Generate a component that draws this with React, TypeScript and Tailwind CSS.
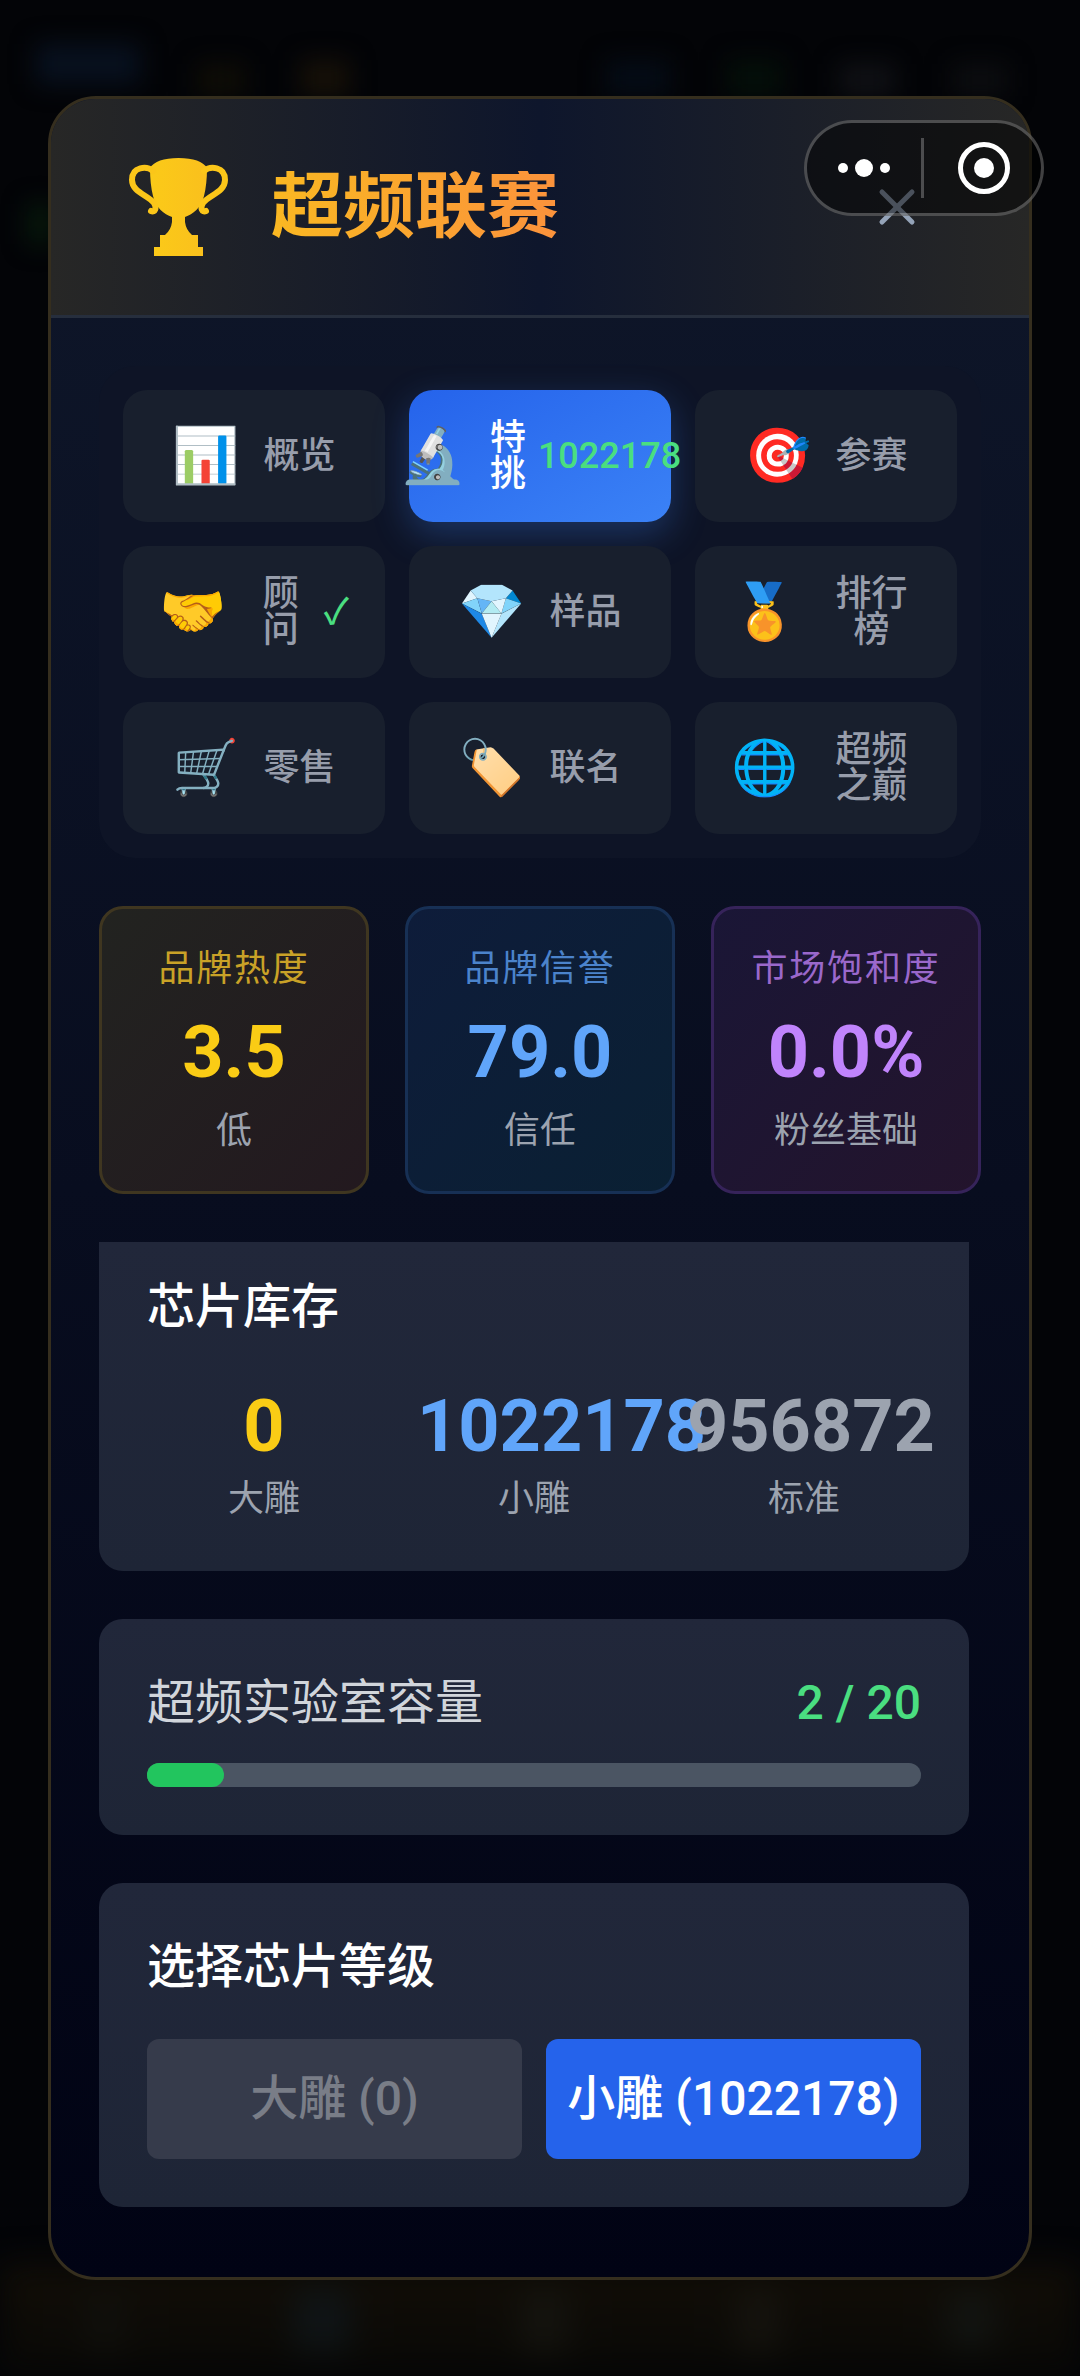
import { X } from "lucide-react";

const CARD = "rounded-3xl bg-linear-to-b/srgb from-[#21273a] to-[#1e2536] px-12";

function Trophy() {
  const handle = "M24 13C18 8 3 8 3 22C3 34 19 37 25 45C28 50 26 55 22 53";
  return (
    <svg viewBox="-6 0 112 98" className="w-[112px] shrink-0" aria-hidden="true">
      <defs>
        <linearGradient id="trophyGold" x1="0" x2="1">
          <stop offset="0" stopColor="#fbca18" />
          <stop offset="1" stopColor="#fac01d" />
        </linearGradient>
      </defs>
      <path
        fill="url(#trophyGold)"
        d="M21 10Q27 0 49.500 0T78 10Q78 26 75 38C72 50 64 56 56 59V64Q57 72 63 77H69V89H74V98H25V89H31V77H36Q42 72 43 64V59C35 56 27 50 24 38Q21 26 21 10Z"
      />
      <g fill="none" stroke="#fbc619" strokeWidth="6" strokeLinecap="round">
        <path d={handle} />
        <path d={handle} transform="translate(99 0) scale(-1 1)" />
      </g>
    </svg>
  );
}

const tabs = [
  { icon: "📊", label: "概览" },
  { icon: "🔬", label: "特挑", badge: "1022178", active: true },
  { icon: "🎯", label: "参赛" },
  { icon: "🤝", label: "顾问", badge: "✓" },
  { icon: "💎", label: "样品" },
  { icon: "🏅", label: "排行榜" },
  { icon: "🛒", label: "零售" },
  { icon: "🏷️", label: "联名" },
  { icon: "🌐", label: "超频之巅" },
];

const stats = [
  {
    name: "品牌热度", value: "3.5", note: "低",
    box: "border-[#3f3620] from-[#222320] to-[#23191f]", title: "text-[#c9a227]", num: "text-[#facc15]",
  },
  {
    name: "品牌信誉", value: "79.0", note: "信任",
    box: "border-[#173055] from-[#0e1c3a] to-[#0a2033]", title: "text-[#4b83cb]", num: "text-[#60a5fa]",
  },
  {
    name: "市场饱和度", value: "0.0%", note: "粉丝基础",
    box: "border-[#36235a] from-[#1a1636] to-[#23142c]", title: "text-[#9a68cb]", num: "text-[#c084fc]",
  },
];

const stock = [
  { name: "大雕", value: "0", color: "text-[#facc15]" },
  { name: "小雕", value: "1022178", color: "text-[#60a5fa]" },
  { name: "标准", value: "956872", color: "text-[#9ca3af]" },
];

function Backdrop() {
  return (
    <div aria-hidden="true" className="absolute inset-0 flex flex-col overflow-hidden">
      <div className="flex h-24 items-end justify-between pr-18 pl-9 blur-md">
        <i className="mb-3 h-10 w-26 bg-[#08111f]" />
        <i className="h-8 w-12 bg-[#0f0d06]" />
        <i className="h-9 w-12 bg-[#171108]" />
        <i className="w-36" />
        <i className="h-9 w-16 bg-[#050c16]" />
        <i className="h-9 w-14 bg-[#040f09]" />
        <i className="h-8 w-14 bg-[#101115]" />
        <i className="h-8 w-14 bg-[#0c0d10]" />
      </div>
      <i className="mt-27 ml-7 h-10 w-6 bg-[#071a0c] blur-md" />
      <div className="mt-auto flex h-28 items-center justify-around bg-linear-to-b/srgb from-[#120e07] to-[#080806] blur-lg">
        <i className="h-16 w-10 bg-[#100f0b]" />
        <i className="h-16 w-14 bg-[#0f1416]" />
        <i className="h-16 w-12 bg-[#14130e]" />
        <i className="h-16 w-10 bg-[#15130e]" />
        <i className="h-14 w-12 bg-[#121411]" />
      </div>
    </div>
  );
}

export default function App() {
  return (
    <main className="relative flex min-h-screen flex-col bg-[#030407] px-12 py-24 font-['Roboto','Noto_Sans_CJK_SC',sans-serif] text-white">
      <Backdrop />
      <section className="relative flex flex-1 flex-col overflow-hidden rounded-[48px] border-3 border-[#352e1e] bg-linear-to-b/srgb from-[#0f172a] to-[#010314]">
        <header className="flex items-center justify-between border-b-3 border-[#262e3d] bg-linear-to-r/srgb from-[#272726] via-[#0e162c] to-[#272726] px-18 py-12">
          <div className="flex items-center gap-9">
            <Trophy />
            <h1 className="bg-linear-to-r/srgb from-[#fab822] to-[#fb923c] bg-clip-text text-7xl font-bold text-transparent">
              超频联赛
            </h1>
          </div>
          <button type="button" aria-label="关闭" className="flex size-30 items-center justify-center text-[#94a3b8]">
            <X size={60} />
          </button>
        </header>

        <div className="flex flex-col gap-12 p-12">
          <nav className="grid grid-cols-3 gap-6 rounded-[36px] bg-[#0e1426] p-6">
            {tabs.map((tab) => (
              <button
                key={tab.label}
                type="button"
                className={
                  "flex h-33 items-center justify-center rounded-3xl px-9 text-4xl leading-none font-medium " +
                  (tab.active
                    ? "bg-linear-to-br/srgb from-[#2563eb] to-[#3b82f6] text-white shadow-[0_12px_36px_rgba(59,130,246,0.3)]"
                    : "bg-[#181f2d] text-[#979dab]")
                }
              >
                <span className="mr-6 flex w-[67px] shrink-0 justify-center text-[54px] leading-none">{tab.icon}</span>
                <span>{tab.label}</span>
                {tab.badge && <span className="ml-3 shrink-0 text-[#4ade80]">{tab.badge}</span>}
              </button>
            ))}
          </nav>

          <div className="grid grid-cols-3 gap-9">
            {stats.map((s) => (
              <div key={s.name} className={"rounded-3xl border-3 bg-linear-to-br/srgb py-9 text-center text-4xl " + s.box}>
                <h2 className={"leading-12 tracking-wider " + s.title}>{s.name}</h2>
                <p className={"mt-3 text-7xl leading-24 font-bold " + s.num}>{s.value}</p>
                <p className="mt-1.5 leading-12 text-[#9ca3af]">{s.note}</p>
              </div>
            ))}
          </div>

          <div className="flex flex-col gap-12 pr-3">
            <section className={CARD + " rounded-t-none pt-[29px] pb-12"}>
              <h2 className="text-5xl leading-18 font-medium">芯片库存</h2>
              <div className="mt-9 grid grid-cols-3 gap-9 text-center">
                {stock.map((s) => (
                  <div key={s.name} className="min-w-0">
                    <p className={"text-7xl leading-24 font-bold " + s.color}>{s.value}</p>
                    <p className="text-4xl leading-12 text-[#9ca3af]">{s.name}</p>
                  </div>
                ))}
              </div>
            </section>

            <section className={CARD + " py-12"}>
              <div className="flex justify-between text-5xl leading-18">
                <h2 id="capacity" className="text-[#d1d5db]">超频实验室容量</h2>
                <span className="font-medium text-[#4ade80]">2 / 20</span>
              </div>
              <div
                role="progressbar"
                aria-labelledby="capacity"
                aria-valuemin={0}
                aria-valuemax={20}
                aria-valuenow={2}
                className="mt-6 h-6 rounded-full bg-[#4b5563]"
              >
                <div className="h-full rounded-full bg-[#22c55e]" style={{ width: `${(2 / 20) * 100}%` }} />
              </div>
            </section>

            <section className={CARD + " py-12"}>
              <h2 className="text-5xl leading-18 font-medium">选择芯片等级</h2>
              <div className="mt-9 grid grid-cols-2 gap-6 text-5xl leading-18 font-medium">
                <button type="button" disabled className="rounded-xl bg-[#363b4b] py-6 whitespace-nowrap text-[#797d87]">
                  大雕 (0)
                </button>
                <button type="button" className="rounded-xl bg-[#2563eb] py-6 whitespace-nowrap">
                  小雕 (1022178)
                </button>
              </div>
            </section>
          </div>
        </div>
      </section>

      <div className="absolute top-30 right-9 flex h-24 w-60 items-center rounded-full border-3 border-white/25 bg-black/50">
        <button type="button" aria-label="更多" className="flex h-full flex-1 items-center justify-center gap-[7px]">
          <i className="size-2.5 rounded-full bg-white" />
          <i className="size-4.5 rounded-full bg-white" />
          <i className="size-2.5 rounded-full bg-white" />
        </button>
        <i className="h-15 w-[3px] bg-white/25" />
        <button type="button" aria-label="退出" className="flex h-full flex-1 items-center justify-center pl-1">
          <i className="flex size-13 items-center justify-center rounded-full border-5 border-white">
            <i className="size-5 rounded-full bg-white" />
          </i>
        </button>
      </div>
    </main>
  );
}
